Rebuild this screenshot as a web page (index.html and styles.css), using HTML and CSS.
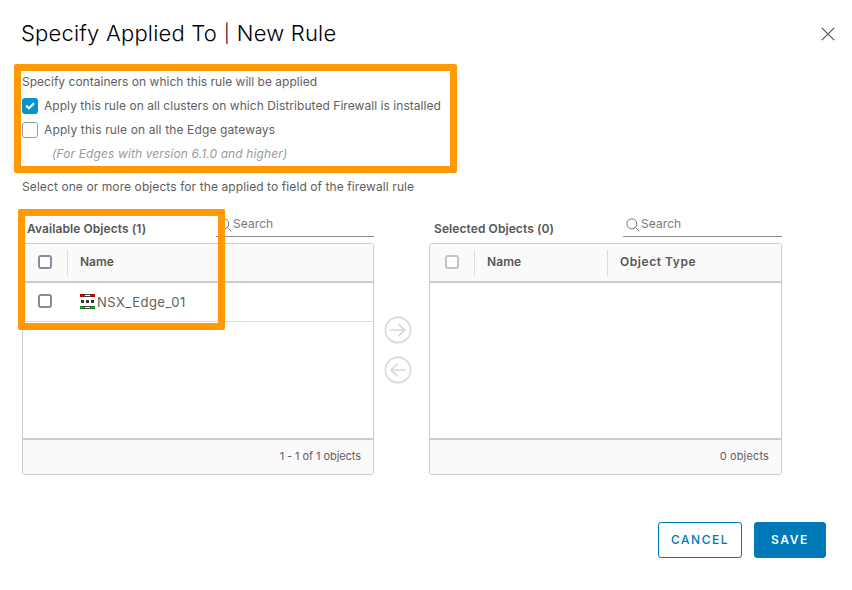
FILE: index.html
```
<!DOCTYPE html>
<html lang="en">
<head>
<meta charset="utf-8">
<title>Specify Applied To | New Rule</title>
<link rel="stylesheet" href="styles.css">
</head>
<body>
<main class="dialog">
  <header class="dialog-head">
    <h1>Specify Applied To <span class="bar">|</span> New Rule</h1>
    <svg class="close" viewBox="0 0 14 14"><path d="M.8.8 13.2 13.2M13.2.8.8 13.2"/></svg>
  </header>

  <section class="options">
    <p class="line l1">Specify containers on which this rule will be applied</p>
    <label class="line l2"><span class="box checked"><svg viewBox="0 0 16 16"><path d="M4.1 7.6 7 10.3 12 5.2"/></svg></span>Apply this rule on all clusters on which Distributed Firewall is installed</label>
    <label class="line l3"><span class="box"></span>Apply this rule on all the Edge gateways</label>
    <p class="line hint">(For Edges with version 6.1.0 and higher)</p>
    <div class="highlight hl-options"></div>
  </section>
  <p class="line select-note">Select one or more objects for the applied to field of the firewall rule</p>

  <section class="picker">
    <div class="panel available">
      <div class="panel-top">
        <h2>Available Objects (1)</h2>
        <div class="search"><svg viewBox="0 0 14 14"><circle cx="5.8" cy="5.8" r="5"/><path d="m9.4 9.4 4 4"/></svg><span>Search</span></div>
      </div>
      <div class="grid">
        <div class="grid-head"><div class="cell-check"><span class="tick"></span></div><div class="cell name">Name</div></div>
        <div class="grid-body">
          <div class="row">
            <div class="cell-check"><span class="tick"></span></div>
            <div class="item">
              <svg viewBox="0 0 15 15" shape-rendering="crispEdges">
                <path fill="#444" d="M0 0h15v3H0zM0 12h15v3H0z"/>
                <path fill="#b00000" d="M0 0h4v3H0zM11 0h4v3h-4z"/>
                <path fill="#f00000" d="M1 1h3v1H1zM11 1h3v1h-3z"/>
                <path fill="#fff" d="M5 1h5v1H5zM5 13h5v1H5z"/>
                <path fill="#008a10" d="M0 12h4v3H0zM11 12h4v3h-4z"/>
                <path fill="#00d010" d="M0 13h4v1H0zM11 13h4v1h-4z"/>
                <path fill="#333" d="M1 6h3v3H1zM6 6h3v3H6zM11 6h3v3h-3z"/>
              </svg><span>NSX_Edge_01</span>
            </div>
          </div>
        </div>
        <div class="grid-foot"><span class="range">1 - 1 of 1 objects</span></div>
      </div>
      <div class="highlight hl-available"></div>
    </div>

    <div class="movers">
      <svg viewBox="0 0 28 28"><circle cx="14" cy="14" r="12.6"/><path d="M6 14h15M14.5 7.8l6.5 6.2-6.5 6.2"/></svg>
      <svg viewBox="0 0 28 28"><circle cx="14" cy="14" r="12.6"/><path d="M22 14H7M13.5 7.8 7 14l6.5 6.2"/></svg>
    </div>

    <div class="panel selected">
      <div class="panel-top">
        <h2>Selected Objects (0)</h2>
        <div class="search"><svg viewBox="0 0 14 14"><circle cx="5.8" cy="5.8" r="5"/><path d="m9.4 9.4 4 4"/></svg><span>Search</span></div>
      </div>
      <div class="grid">
        <div class="grid-head"><div class="cell-check"><span class="tick disabled"></span></div><div class="cell name">Name</div><div class="cell type">Object Type</div></div>
        <div class="grid-body"></div>
        <div class="grid-foot"><span class="count">0 objects</span></div>
      </div>
    </div>
  </section>

  <footer class="actions">
    <button class="btn cancel">CANCEL</button>
    <button class="btn save">SAVE</button>
  </footer>
</main>
</body>
</html>
```
FILE: styles.css
```
* { box-sizing: border-box; }
body { margin: 0; background: #fff; color: #606060; font: 400 12px/24px Inter, "Liberation Sans", sans-serif; white-space: nowrap; }
h1, h2, p { margin: 0; }
svg { display: block; flex: none; fill: none; }
.dialog { width: 852px; height: 590px; padding: 18px 26px 0 22px; }
.dialog-head { display: flex; justify-content: space-between; height: 52px; }
h1 { font-size: 22px; font-weight: 300; line-height: 30px; letter-spacing: .2px; color: #000; margin-left: -1px; }
.bar { display: inline-block; width: 7px; font-size: 18px; line-height: 18px; text-align: center; vertical-align: 1px; }
.close { width: 14px; height: 14px; margin: 9px -9px 0 0; stroke: #565656; stroke-width: 1.2; }

.options { position: relative; }
.line { display: flex; align-items: center; height: 24px; }
.l1 { letter-spacing: .02px; }
.l2 { letter-spacing: .05px; }
.l3 { letter-spacing: .13px; }
.hint { padding-left: 30px; font-style: italic; letter-spacing: .12px; color: #9a9a9a; }
.box { flex: none; width: 16px; height: 16px; margin-right: 6px; border: 1px solid #9a9a9a; border-radius: 3px; }
.box.checked { border: 0; background: #0095d3; }
.box svg { width: 16px; height: 16px; stroke: #fff; stroke-width: 2.2; }
.select-note { margin-top: 9px; letter-spacing: .09px; }
.highlight { position: absolute; z-index: 2; border: 7px solid #ff9a05; border-radius: 2px; pointer-events: none; }
.hl-options { left: -8px; top: -6px; width: 443px; height: 109px; }
.hl-available { left: -4px; top: -2px; width: 207px; height: 121px; }

.picker { display: flex; margin-top: 12px; }
.panel { position: relative; width: 352px; }
.panel.selected { width: 353px; }
.panel-top { display: flex; justify-content: space-between; height: 32px; padding-left: 5px; }
h2 { font-size: 12px; font-weight: 600; line-height: 24px; padding-top: 6px; letter-spacing: .08px; color: #565656; }
.search { display: flex; width: 158px; height: 26px; padding-left: 2px; border-bottom: 1px solid #8c8c8c; line-height: 25px; color: #7a7a7a; }
.selected .search { width: 159px; padding-left: 3px; }
.search svg { width: 14px; height: 14px; margin: 7px 1px 0 0; stroke: #777; stroke-width: 1; }
.search span { letter-spacing: .08px; }
.grid { display: flex; flex-direction: column; height: 232px; border: 1px solid #ccc; border-radius: 3px; overflow: hidden; }
.grid-head { display: flex; align-items: center; height: 39px; background: #fafafa; border-bottom: 2px solid #ccc; font-weight: 600; color: #565656; }
.cell-check { flex: none; display: flex; align-items: center; width: 44px; height: 26px; padding: 0 0 2px 15px; }
.cell { height: 26px; line-height: 24px; padding-left: 12px; border-left: 1px solid #ddd; }
.selected .name { width: 133px; letter-spacing: .1px; }
.type { letter-spacing: .55px; }
.tick { width: 14px; height: 14px; border: 2px solid #8c8a9a; border-radius: 3px; background: #fff; }
.tick.disabled { border-color: #c4c3cc; }
.grid-body { flex: 1; }
.row { display: flex; align-items: center; height: 39px; border-bottom: 1px solid #ddd; }
.item { display: flex; align-items: center; height: 37px; margin-bottom: 1px; padding-left: 13px; font-size: 13px; letter-spacing: .48px; }
.item svg { width: 15px; height: 15px; margin-right: 2px; }
.item span { padding-top: 1px; }
.grid-foot { display: flex; justify-content: flex-end; height: 36px; padding: 0 12px; line-height: 33px; font-size: 11px; background: #fafafa; border-top: 2px solid #ccc; }
.range { letter-spacing: -.07px; }
.count { letter-spacing: .15px; }
.movers { display: flex; flex-direction: column; gap: 12px; width: 55px; padding: 105px 0 0 10px; }
.movers svg { width: 28px; height: 28px; stroke: #d8d8d8; stroke-width: 1.6; }

.actions { display: flex; justify-content: flex-end; gap: 12px; margin-top: 47px; }
.btn { height: 36px; padding: 0; border: 1px solid #0079b8; border-radius: 3px; font: 500 12px/34px Inter, sans-serif; }
.cancel { width: 84px; color: #0079b8; background: #fff; letter-spacing: 1.5px; }
.save { width: 72px; color: #fff; background: #0079b8; font-weight: 600; letter-spacing: 1.6px; }
```
